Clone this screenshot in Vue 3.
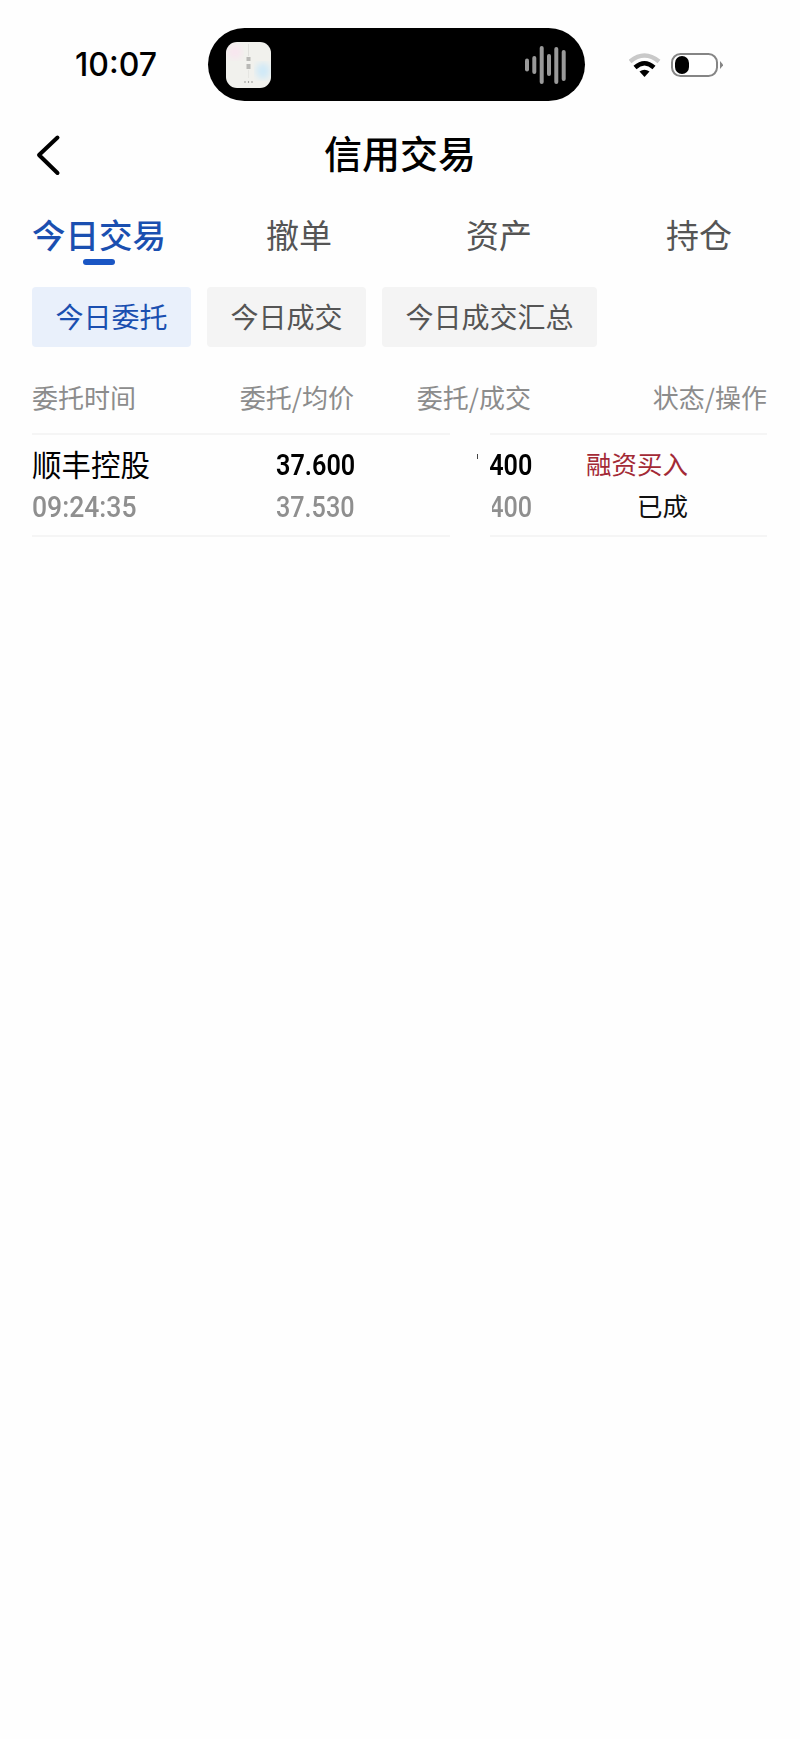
<script setup>
const tabs = ["今日交易", "撤单", "资产", "持仓"];
const subTabs = ["今日委托", "今日成交", "今日成交汇总"];
const columns = ["委托时间", "委托/均价", "委托/成交", "状态/操作"];
const order = {
  name: "顺丰控股",
  time: "09:24:35",
  price: "37.600",
  avgPrice: "37.530",
  qty: "400",
  filled: "400",
  type: "融资买入",
  status: "已成",
};
const bars = [
  { x: 0, y: 12.5, h: 13 },
  { x: 7.3, y: 10, h: 18 },
  { x: 14.7, y: 0, h: 38 },
  { x: 22, y: 8, h: 22 },
  { x: 29.3, y: 1, h: 37 },
  { x: 36.7, y: 4, h: 31 },
];
</script>

<template>
  <div class="page">
    <div class="status-bar">
      <span class="clock">10:07</span>
      <div class="island">
        <svg class="app-icon" width="45" height="46" viewBox="0 0 45 46">
          <defs>
            <filter id="blur"><feGaussianBlur stdDeviation="3" /></filter>
            <clipPath id="iconClip"><rect width="45" height="46" rx="11" /></clipPath>
          </defs>
          <g clip-path="url(#iconClip)">
            <rect width="45" height="46" fill="#f1f1ed" />
            <ellipse cx="9" cy="10" rx="7" ry="7" fill="#f8e6ef" filter="url(#blur)" />
            <ellipse cx="37" cy="29" rx="7" ry="8" fill="#cfe9f8" filter="url(#blur)" />
            <line x1="22.5" y1="2" x2="22.5" y2="14" stroke="#e0e0dc" />
            <line x1="22.5" y1="28" x2="22.5" y2="36" stroke="#e6e6e2" />
            <rect x="20.5" y="15" width="4" height="4" fill="#8b8b88" opacity=".55" />
            <rect x="20.5" y="22" width="4" height="5" fill="#8b8b88" opacity=".55" />
            <circle cx="19" cy="40" r=".7" fill="#777" />
            <circle cx="22.5" cy="40" r=".7" fill="#777" />
            <circle cx="26" cy="40" r=".7" fill="#777" />
          </g>
        </svg>
        <svg class="wave" width="41" height="38" viewBox="0 0 41 38">
          <rect
            v-for="(b, i) in bars"
            :key="i"
            :x="b.x"
            :y="b.y"
            width="4"
            :height="b.h"
            rx="2"
            fill="#9a9a9a"
          />
        </svg>
      </div>
      <svg class="wifi" width="32" height="24" viewBox="0 0 32 24">
        <path d="M1 8.5 Q15.5 -3.5 30 8.5" fill="none" stroke="#c9c9c9" stroke-width="4.5" />
        <path d="M6 14.5 Q15.5 6 25 14.5" fill="none" stroke="#000" stroke-width="4.5" />
        <path d="M10.5 18.5 Q15.5 15 20.5 18.5 L15.5 24 Z" fill="#000" />
      </svg>
      <svg class="battery" width="53" height="25" viewBox="0 0 53 25">
        <rect x="1" y="1" width="45" height="22" rx="8.5" fill="#fff" stroke="#858585" stroke-width="2" />
        <rect x="4" y="3" width="14" height="18" rx="7" fill="#000" />
        <path d="M49 8 L52 11.5 L52 12.5 L49 16 Z" fill="#858585" />
      </svg>
    </div>

    <div class="nav">
      <svg class="back" width="28" height="44" viewBox="0 0 28 44">
        <path d="M23.5 4.5 L5 22 L23.5 40" fill="none" stroke="#000" stroke-width="4" stroke-linecap="round" stroke-linejoin="round" />
      </svg>
      <h1 class="title">信用交易</h1>
    </div>

    <div class="tabs">
      <div v-for="(t, i) in tabs" :key="t" class="tab" :class="{ active: i === 0 }">
        <span class="tab-text">{{ t }}</span>
      </div>
    </div>

    <div class="sub-tabs">
      <div v-for="(t, i) in subTabs" :key="t" class="sub-tab" :class="{ active: i === 0 }">{{ t }}</div>
    </div>

    <div class="table">
      <div class="head grid">
        <span v-for="(c, i) in columns" :key="c" :class="{ right: i > 0 }">{{ c }}</span>
      </div>
      <div class="row grid">
        <div class="cell">
          <span class="name">{{ order.name }}</span>
          <span class="num sub time">{{ order.time }}</span>
        </div>
        <div class="cell right">
          <span class="num strong">{{ order.price }}</span>
          <span class="num sub">{{ order.avgPrice }}</span>
        </div>
        <div class="cell right">
          <span class="num strong">{{ order.qty }}</span>
          <span class="num sub">{{ order.filled }}</span>
        </div>
        <div class="cell right state">
          <span class="type">{{ order.type }}</span>
          <span class="status">{{ order.status }}</span>
        </div>
        <div class="cover"></div>
      </div>
    </div>
  </div>
</template>

<style scoped>
.page {
  width: 800px;
  min-height: 1739px;
  background: #fefefe;
  font-family: "Noto Sans CJK SC", "Noto Sans", sans-serif;
  color: #000;
}

.status-bar {
  height: 115px;
  display: flex;
  align-items: flex-start;
  box-sizing: border-box;
  padding: 28px 0 0 75px;
}

.clock {
  width: 132.5px;
  margin-top: 17px;
  font-family: Inter, sans-serif;
  font-size: 32px;
  font-weight: 550;
  line-height: 40px;
}

.island {
  width: 377px;
  height: 73px;
  border-radius: 37px;
  background: #000;
  display: flex;
  align-items: center;
  justify-content: space-between;
  box-sizing: border-box;
  padding: 0 19px 0 18.5px;
}

.app-icon,
.wave,
.wifi,
.battery,
.back {
  display: block;
  flex: none;
}

.wifi {
  margin: 25px 0 0 44.5px;
}

.battery {
  margin: 24.5px 0 0 10px;
}

.nav {
  height: 80px;
  display: grid;
  grid-template-columns: 1fr auto 1fr;
  align-items: center;
  padding-left: 34px;
  padding-right: 34px;
}

.title {
  grid-column: 2;
  grid-row: 1;
  margin: -7px 0 0;
  font-size: 38px;
  font-weight: 500;
  line-height: 50px;
}

.back {
  grid-column: 1;
  grid-row: 1;
}

.tabs {
  height: 92px;
  display: grid;
  grid-template-columns: 167px 200px 200px 200px;
  padding-left: 32px;
}

.tab {
  padding-top: 17px;
  text-align: center;
  font-size: 33px;
  line-height: 44px;
  color: #555;
}

.tab.active {
  text-align: left;
  color: #1a4fb0;
  font-size: 33.5px;
  font-weight: 500;
}

.tab-text {
  position: relative;
  display: inline-block;
}

.tab.active .tab-text::after {
  content: "";
  position: absolute;
  left: 50%;
  bottom: -9px;
  width: 32px;
  height: 6px;
  margin-left: -16px;
  border-radius: 3px;
  background: #1a56c4;
}

.sub-tabs {
  display: flex;
  gap: 16px;
  padding-left: 32px;
}

.sub-tab {
  height: 60px;
  padding: 0 23.5px;
  border-radius: 4px;
  background: #f4f4f4;
  color: #555;
  font-size: 28px;
  line-height: 58px;
}

.sub-tab.active {
  background: #e9f0fb;
  color: #1a4fb0;
}

.table {
  margin: 0 33px 0 32px;
}

.grid {
  display: grid;
  grid-template-columns: 200px 122px 177px 236px;
}

.right {
  text-align: right;
}

.head {
  height: 88px;
  box-sizing: border-box;
  padding-top: 31px;
  border-bottom: 2px solid #f5f5f5;
  color: #8c8c8c;
  font-size: 26px;
  line-height: 38px;
}

.row {
  position: relative;
  height: 102px;
  box-sizing: border-box;
  border-bottom: 2px solid #f5f5f5;
}

.cell {
  display: flex;
  flex-direction: column;
  align-items: flex-end;
  padding-top: 9px;
}

.cell:first-child {
  align-items: flex-start;
}

.name {
  font-size: 29.5px;
  line-height: 42px;
  margin: -2px 0 2px;
}

.num {
  font-family: Roboto, sans-serif;
  font-size: 30px;
  line-height: 42px;
  font-weight: 500;
  white-space: nowrap;
  margin-right: -1px;
  transform: scaleX(0.84);
  transform-origin: right center;
}

.num.time {
  margin-right: 0;
  transform: scaleX(0.885);
  transform-origin: left center;
}

.num.strong {
  color: #000;
  font-weight: 600;
}

.num.sub {
  color: #8f8f8f;
}

.state {
  padding-right: 79px;
}

.type {
  font-size: 25.5px;
  line-height: 42px;
  margin-top: -2px;
  color: #a32a36;
}

.status {
  font-size: 25.5px;
  line-height: 42px;
  color: #111;
}

.cover {
  position: absolute;
  left: 418px;
  top: -2px;
  width: 40px;
  height: 104px;
  background: #fefefe;
}

.cover::before {
  content: "";
  position: absolute;
  left: 27px;
  top: 21px;
  width: 1px;
  height: 5px;
  background: #444;
}

.cover::after {
  content: "";
  position: absolute;
  left: 40px;
  top: 50px;
  width: 2px;
  height: 44px;
  background: #fefefe;
}
</style>

<style>
body {
  background: #fefefe;
}
</style>
